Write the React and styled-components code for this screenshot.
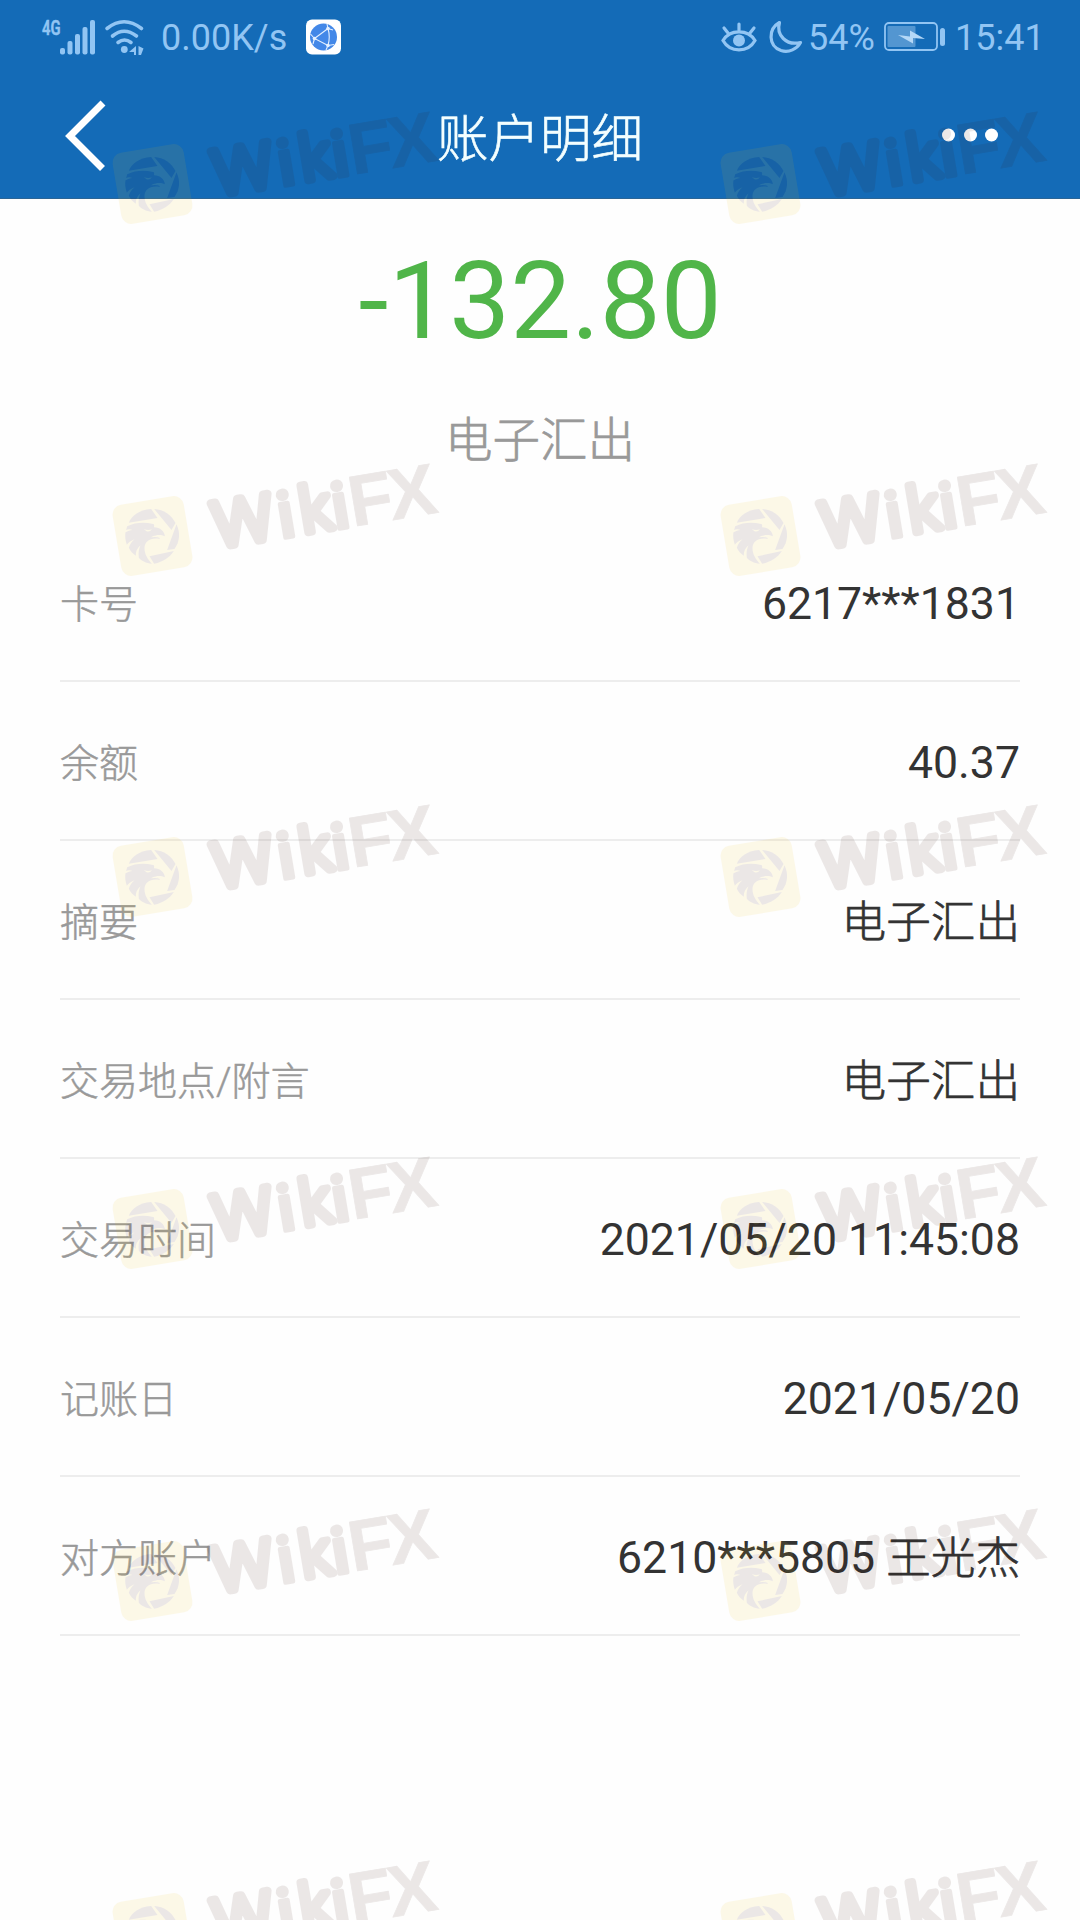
import styled, { createGlobalStyle } from "styled-components";

const GlobalStyle = createGlobalStyle`
  * {
    box-sizing: border-box;
  }
  body {
    margin: 0;
    background: #fefefe;
    font-family: Roboto, "Noto Sans CJK SC", sans-serif;
  }
`;

const Screen = styled.div`
  position: relative;
  width: 1080px;
  height: 1920px;
  overflow: hidden;
  background: #fefefe;
`;

const Header = styled.header`
  height: 199px;
  background: #146bb7;
  border-bottom: 1px solid #2b6596;
`;

const StatusBar = styled.div`
  display: flex;
  justify-content: space-between;
  height: 74px;
  padding: 0 42px;
  color: #92c5f3;
  font-size: 36px;
  line-height: 74px;
`;

const StatusGroup = styled.div`
  display: flex;
  align-items: center;
`;

const StatusText = styled.span`
  width: ${({ $width }) => $width}px;
  margin-left: ${({ $gap }) => $gap}px;
  padding-top: 2px;
  white-space: nowrap;
`;

const StatusIcon = styled.svg`
  display: block;
  flex: none;
  margin-left: ${({ $gap }) => $gap || 0}px;
  overflow: visible;
`;

const NavBar = styled.div`
  display: grid;
  grid-template-columns: 240px 1fr 240px;
  align-items: center;
  height: 124px;
  padding: 0 62px;
`;

const NavTitle = styled.h1`
  margin: 0;
  padding-top: 7px;
  color: #f4ffff;
  font-size: 51.5px;
  font-weight: 300;
  line-height: 80px;
  text-align: center;
  -webkit-text-stroke: 0.6px currentColor;
`;

const NavButton = styled.button`
  display: flex;
  padding: 0 0 ${({ $lift }) => $lift || 0}px;
  border: 0;
  background: none;
  justify-self: ${({ $align }) => $align};
`;

const Summary = styled.section`
  display: flex;
  flex-direction: column;
  align-items: center;
  height: 324px;
  padding-top: 37px;
`;

const Amount = styled.div`
  color: #50b549;
  font-size: 108.4px;
  line-height: 130px;
`;

const Kind = styled.div`
  margin-top: 43px;
  color: #999;
  font-size: 47.5px;
  font-weight: 300;
  line-height: 64px;
  -webkit-text-stroke: 0.7px currentColor;
`;

const Details = styled.dl`
  margin: 0 60px;
`;

const Row = styled.div`
  display: flex;
  align-items: center;
  justify-content: space-between;
  height: 159px;
  border-bottom: 2px solid #ededed;
`;

const Label = styled.dt`
  padding-bottom: 2px;
  color: #999;
  font-size: 39px;
  font-weight: 300;
  -webkit-text-stroke: 0.5px currentColor;
`;

const Value = styled.dd`
  margin: 0;
  padding-top: 4px;
  color: #333;
  font-size: 44.6px;
  line-height: 60px;
`;

const Hanzi = styled.span`
  font-weight: 300;
  line-height: 1;
  vertical-align: -1px;
  -webkit-text-stroke: 0.7px currentColor;
`;

const WatermarkLayer = styled.svg`
  position: absolute;
  inset: 0;
  pointer-events: none;
`;

const rows = [
  { label: "卡号", value: "6217***1831" },
  { label: "余额", value: "40.37" },
  { label: "摘要", hanzi: "电子汇出" },
  { label: "交易地点/附言", hanzi: "电子汇出" },
  { label: "交易时间", value: "2021/05/20 11:45:08" },
  { label: "记账日", value: "2021/05/20" },
  { label: "对方账户", value: "6210***5805 ", hanzi: "王光杰" },
];

const markColumns = [152.5, 760.5];
const markRows = [184, 536, 877, 1229, 1581, 1933];

function SignalIcon() {
  return (
    <StatusIcon width="54" height="36" viewBox="0 0 54 36" fill="currentColor">
      <text x="0" y="15.5" fontSize="20" fontWeight="600" stroke="currentColor" strokeWidth="0.5" textLength="18.5" lengthAdjust="spacingAndGlyphs">
        4G
      </text>
      <rect x="18" y="29" width="5" height="6.5" rx="2" />
      <rect x="25.5" y="22" width="5" height="13.5" rx="2" />
      <rect x="33" y="15" width="5" height="20.5" rx="2" />
      <rect x="40.5" y="8" width="5" height="27.5" rx="2" />
      <rect x="48" y="1" width="5" height="34.5" rx="2" />
    </StatusIcon>
  );
}

function WifiIcon() {
  return (
    <StatusIcon $gap={8} width="41" height="36" viewBox="0 0 41 36" fill="none" stroke="currentColor" strokeWidth="3.6" strokeLinecap="round">
      <path d="M3 9.5Q20 -4 37.5 9.5" />
      <path d="M8.5 17Q20 7.5 32.5 17" />
      <path d="M14 23.5Q20.5 18.5 27 23.5" />
      <circle cx="20.3" cy="30.5" r="3.4" fill="currentColor" stroke="none" />
      <path d="M32 27v9h-2v-3h-5zM34.500 27l5 2.500-2.500 6.500h-2.500z" fill="currentColor" stroke="none" />
    </StatusIcon>
  );
}

function BrowserIcon() {
  return (
    <StatusIcon $gap={18} width="35" height="36" viewBox="0 0 35 36">
      <rect y="0.5" width="35" height="35" rx="6" fill="#fff" />
      <circle cx="17.5" cy="18" r="13.5" fill="#4388e8" />
      <path
        d="M22 9.5L8.500 19.500L22 26.500M22 9.500Q24.500 18 22 26.500M22 9.500L21 5M22 9.500L27 11M8.500 19.500L4.500 15M8.500 19.500L7 25M22 26.500L28 25.500M22 26.500L20 31"
        fill="none"
        stroke="#e4f0ff"
        strokeWidth="1.1"
      />
      <g fill="#e4f0ff">
        <circle cx="22" cy="9.5" r="1.8" />
        <circle cx="8.5" cy="19.5" r="1.8" />
        <circle cx="22" cy="26.5" r="1.8" />
      </g>
    </StatusIcon>
  );
}

function EyeIcon() {
  return (
    <StatusIcon width="36" height="34" viewBox="0 0 36 34" fill="none" stroke="currentColor" strokeWidth="3.2" strokeLinecap="round">
      <path d="M2 20.5C9 9 27 9 34 20.5C27 33 9 33 2 20.5Z" />
      <path d="M18 4v6M3 8l4 5M33 8l-4 5" />
      <circle cx="18" cy="20.5" r="6" fill="currentColor" stroke="none" />
    </StatusIcon>
  );
}

function MoonIcon() {
  return (
    <StatusIcon $gap={12} width="34" height="34" viewBox="0 0 34 34" fill="none" stroke="currentColor" strokeWidth="3.2" strokeLinejoin="round">
      <path d="M10.5 2.5C-1 9 -1 26 12 30.5C20 33 28 29 31.5 22.5C17 26 7 15 10.5 2.5Z" />
    </StatusIcon>
  );
}

function BatteryIcon() {
  return (
    <StatusIcon $gap={10} width="61" height="30" viewBox="0 0 61 30">
      <rect x="1" y="1" width="52" height="27" rx="4" fill="none" stroke="currentColor" strokeWidth="1.8" />
      <rect x="3.5" y="4" width="28" height="21" rx="1" fill="#5396d1" />
      <rect x="56" y="6" width="5" height="18" rx="2.5" fill="currentColor" />
      <path d="M14 13l12 1.500V8.500l15 8.500-12-1v5.500z" fill="#b5d8f7" />
    </StatusIcon>
  );
}

// eagle head inside a camera shutter
function Eagle() {
  return (
    <g transform="rotate(9.5) scale(0.3333) translate(-186 -258)" fill="#381008">
      <path d="M115 218C122 200 145 178 182 177L201 204Z" />
      <path d="M191 177C220 179 243 195 255 219L243 240Z" />
      <path d="M258 223C270 248 268 275 252 297L230 300Z" />
      <path d="M177 319L250 303C238 322 218 336 191 341Z" />
      <path d="M110 229C135 217 160 216 188 222C193 223 190 229 191 232C209 233 222 243 223 259C214 254 205 254 196 256C201 261 207 262 208 267C181 261 162 274 162 294C162 314 172 327 184 341C168 340 150 331 145 323C143 308 145 297 150 286C139 295 135 307 136 317C127 311 119 302 115 293C118 283 124 275 132 268C121 272 113 279 109 284C104 270 103 257 105 247C112 243 119 241 126 240C117 237 112 238 107 240Z" />
      <path d="M160 237Q172 242 184 238Q177 248 167 243Z" fill="#f0c010" />
      <path d="M181 262Q190 256 199 257L207 263Q195 259 181 262Z" fill="#f0c010" />
    </g>
  );
}

function Watermark({ x, y }) {
  return (
    <g transform={`translate(${x} ${y}) rotate(-9.5)`} opacity="0.09">
      <rect x="-36" y="-36" width="72" height="72" rx="10" fill="#f0c010" />
      <Eagle />
      <g fill="#381008" stroke="#381008" strokeLinejoin="round">
        <text x="61" y="22" fontSize="63" fontWeight="300" strokeWidth="8" textLength="61" lengthAdjust="spacingAndGlyphs">
          W
        </text>
        <text y="22" fontSize="63" fontWeight="300" strokeWidth="8">
          <tspan x="126.5" y="23.5" fontSize="64" fontWeight="500" strokeWidth="4.5">i</tspan>
          <tspan x="149.5" y="22">k</tspan>
          <tspan x="181.5" y="23.5" fontSize="64" fontWeight="500" strokeWidth="4.5">i</tspan>
        </text>
        <text x="199 239" y="24" fontSize="72" fontFamily="Liberation Sans" fontWeight="700" strokeWidth="0.8">
          FX
        </text>
      </g>
    </g>
  );
}

export default function App() {
  return (
    <Screen>
      <GlobalStyle />
      <Header>
        <StatusBar>
          <StatusGroup>
            <SignalIcon />
            <WifiIcon />
            <StatusText $width={127} $gap={16}>0.00K/s</StatusText>
            <BrowserIcon />
          </StatusGroup>
          <StatusGroup>
            <EyeIcon />
            <MoonIcon />
            <StatusText $width={66} $gap={5}>54%</StatusText>
            <BatteryIcon />
            <StatusText $width={83} $gap={10}>15:41</StatusText>
          </StatusGroup>
        </StatusBar>
        <NavBar>
          <NavButton $align="start" aria-label="返回">
            <svg width="46" height="72" viewBox="0 0 46 72" fill="none" stroke="#fff" strokeWidth="7">
              <path d="M41 3L8 36L40.5 68.5" />
            </svg>
          </NavButton>
          <NavTitle>账户明细</NavTitle>
          <NavButton $align="end" $lift={2} aria-label="更多">
            <svg width="76" height="14" viewBox="0 0 76 14" fill="#fff">
              <circle cx="6.500" cy="7" r="6.5" />
              <circle cx="28.500" cy="7" r="6.5" />
              <circle cx="49.500" cy="7" r="6.5" />
            </svg>
          </NavButton>
        </NavBar>
      </Header>
      <Summary>
        <Amount>-132.80</Amount>
        <Kind>电子汇出</Kind>
      </Summary>
      <Details>
        {rows.map((row) => (
          <Row key={row.label}>
            <Label>{row.label}</Label>
            <Value>
              {row.value}
              {row.hanzi && <Hanzi>{row.hanzi}</Hanzi>}
            </Value>
          </Row>
        ))}
      </Details>
      <WatermarkLayer width="1080" height="1920" aria-hidden="true">
        {markRows.map((y) => markColumns.map((x) => <Watermark key={`${x}-${y}`} x={x} y={y} />))}
      </WatermarkLayer>
    </Screen>
  );
}
